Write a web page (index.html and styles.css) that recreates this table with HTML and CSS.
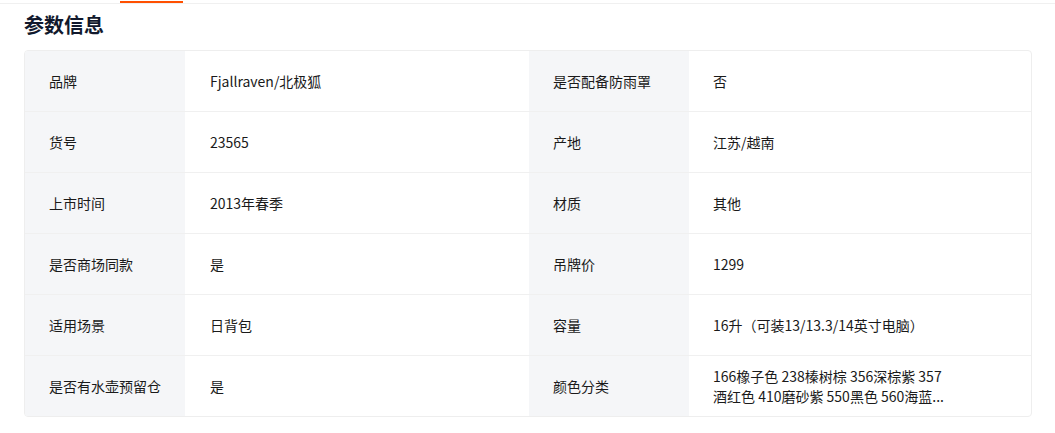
FILE: index.html
```html
<!DOCTYPE html>
<html lang="zh-CN">
<head>
<meta charset="utf-8">
<link rel="stylesheet" href="styles.css">
</head>
<body>
<div class="page">
  <div class="tabbar"><span class="tab-active"></span></div>
  <h2 class="title">参数信息</h2>
  <div class="params">
    <div class="row">
      <div class="label">品牌</div><div class="value">Fjallraven/北极狐</div>
      <div class="label">是否配备防雨罩</div><div class="value">否</div>
    </div>
    <div class="row">
      <div class="label">货号</div><div class="value">23565</div>
      <div class="label">产地</div><div class="value">江苏/越南</div>
    </div>
    <div class="row">
      <div class="label">上市时间</div><div class="value">2013年春季</div>
      <div class="label">材质</div><div class="value">其他</div>
    </div>
    <div class="row">
      <div class="label">是否商场同款</div><div class="value">是</div>
      <div class="label">吊牌价</div><div class="value">1299</div>
    </div>
    <div class="row">
      <div class="label">适用场景</div><div class="value">日背包</div>
      <div class="label">容量</div><div class="value">16升（可装13/13.3/14英寸电脑）</div>
    </div>
    <div class="row">
      <div class="label">是否有水壶预留仓</div><div class="value">是</div>
      <div class="label">颜色分类</div><div class="value"><span class="clamp">166橡子色 238榛树棕 356深棕紫 357酒红色 410磨砂紫 550黑色 560海蓝...</span></div>
    </div>
  </div>
</div>
</body>
</html>
```

FILE: styles.css
```css
* { box-sizing: border-box; }
html, body { margin: 0; padding: 0; background: #fff; }
body {
  font-family: "Noto Sans CJK SC", "Noto Sans", sans-serif;
  color: #1f1f1f;
  font-size: 14px;
}
.page { width: 1055px; padding: 0 24px; }
.tabbar {
  height: 4px;
  border-bottom: 1px solid #f0f0f0;
  position: relative;
  margin: 0 -24px;
}
.tab-active {
  position: absolute;
  left: 120px;
  top: 1px;
  width: 63px;
  height: 2px;
  background: #ff5000;
}
.title {
  margin: 0;
  height: 44px;
  line-height: 42px;
  font-size: 20px;
  font-weight: 700;
  color: #11192d;
}
.params {
  width: 1008px;
  border: 1px solid #eeeeee;
  border-radius: 4px;
  overflow: hidden;
  margin-top: 2px;
}
.row {
  display: grid;
  grid-template-columns: 160px 344px 160px 1fr;
  height: 61px;
  border-top: 1px solid #f0f0f0;
}
.row:first-child { border-top: none; height: 60px; }
.label {
  background: #f5f6f8;
  padding-left: 24px;
  display: flex;
  align-items: center;
  color: #1a1a1a;
}
.value {
  padding-left: 25px;
  display: flex;
  align-items: center;
  color: #1a1a1a;
}
.row .value:nth-child(4) { padding-left: 24px; }
.clamp {
  width: 240px;
  line-height: 20px;
}
```
